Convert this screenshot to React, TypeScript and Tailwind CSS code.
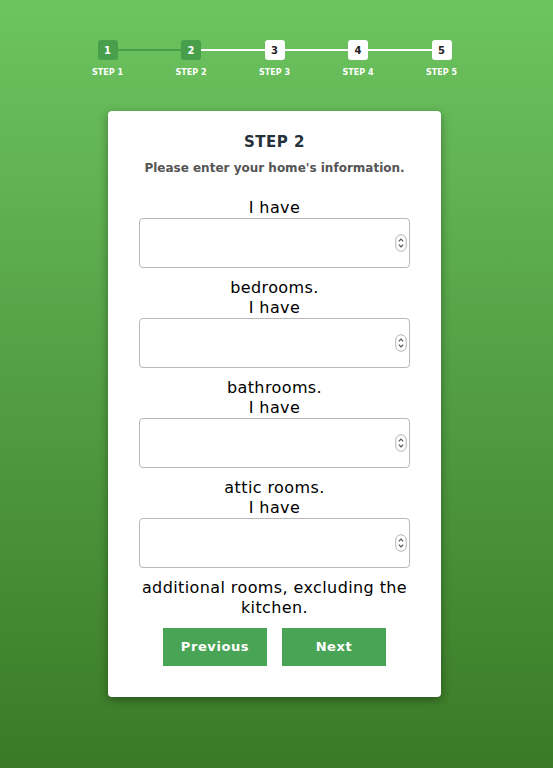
import React from "react";

const STEPS = [1, 2, 3, 4, 5];
const CURRENT = 2;

const FIELDS = [
  { before: "I have", after: "bedrooms." },
  { before: "I have", after: "bathrooms." },
  { before: "I have", after: "attic rooms." },
  { before: "I have", after: "additional rooms, excluding the kitchen." },
];

const Spinner: React.FC = () => (
  <svg width="12" height="18" viewBox="0 0 12 18" className="absolute right-[3px] top-1/2 -translate-y-1/2">
    <rect x="0.75" y="0.75" width="10.5" height="16.5" rx="5.25" fill="white" stroke="#b5b5b5" strokeWidth="1" />
    <path d="M3.8 7.3 L6 5.1 L8.2 7.3" fill="none" stroke="#555" strokeWidth="1.2" />
    <path d="M3.8 10.7 L6 12.9 L8.2 10.7" fill="none" stroke="#555" strokeWidth="1.2" />
  </svg>
);

const Stepper: React.FC = () => (
  <div className="relative mx-auto w-[354px] pt-10">
    <div className="absolute left-[10px] right-[10px] top-[49px] flex">
      {STEPS.slice(0, -1).map((s) => (
        <div key={s} className={`h-[2px] flex-1 ${s < CURRENT ? "bg-[#479f4b]" : "bg-white"}`} />
      ))}
    </div>
    <div className="relative flex justify-between">
      {STEPS.map((s) => (
        <div key={s} className="flex w-[20px] flex-col items-center">
          <div
            className={`flex h-[20px] w-[20px] items-center justify-center rounded-[3px] text-[10px] font-bold ${
              s <= CURRENT ? "bg-[#479f4b] text-white" : "bg-white text-[#222]"
            }`}
          >
            {s}
          </div>
          <div className="mt-[7px] whitespace-nowrap text-[8px] font-bold text-white">STEP {s}</div>
        </div>
      ))}
    </div>
  </div>
);

export default function App() {
  return (
    <div
      className="min-h-[768px] w-full bg-gradient-to-b from-[#6dc460] to-[#3a7a26] pb-[71px] pr-[4px]"
      style={{ fontFamily: '"DejaVu Sans", "Open Sans", sans-serif' }}
    >
      <Stepper />
      <div className="mx-auto mt-[32px] w-[333px] rounded-[4px] bg-white px-[31px] pb-[31px] pt-[20px] shadow-[0_3px_10px_rgba(0,0,0,0.35)]">
        <h2 className="text-center text-[15px] font-bold leading-[22px] tracking-[0.5px] text-[#26323a]">STEP 2</h2>
        <p className="mt-[7px] text-center text-[12px] font-semibold leading-[16px] text-[#555]">
          Please enter your home's information.
        </p>
        <div className="mt-[22px] flex flex-col">
          {FIELDS.map((f, i) => (
            <div key={i} className="flex flex-col">
              <div className="text-center text-[16px] leading-[20px] tracking-[0.4px] text-black">{f.before}</div>
              <div className="relative">
                <input
                  type="text"
                  className="block h-[50px] w-full rounded-[4px] border border-[#b8b8b8] bg-white px-3 outline-none"
                />
                <Spinner />
              </div>
              <div className="pt-[10px] text-center text-[16px] leading-[20px] tracking-[0.4px] text-black">
                {f.after}
              </div>
            </div>
          ))}
        </div>
        <div className="mt-[10px] flex justify-center gap-[15px]">
          <button className="h-[38px] w-[104px] bg-[#4aa455] text-[13px] font-bold tracking-[0.6px] text-white">
            Previous
          </button>
          <button className="h-[38px] w-[104px] bg-[#4aa455] text-[13px] font-bold tracking-[0.6px] text-white">
            Next
          </button>
        </div>
      </div>
    </div>
  );
}
